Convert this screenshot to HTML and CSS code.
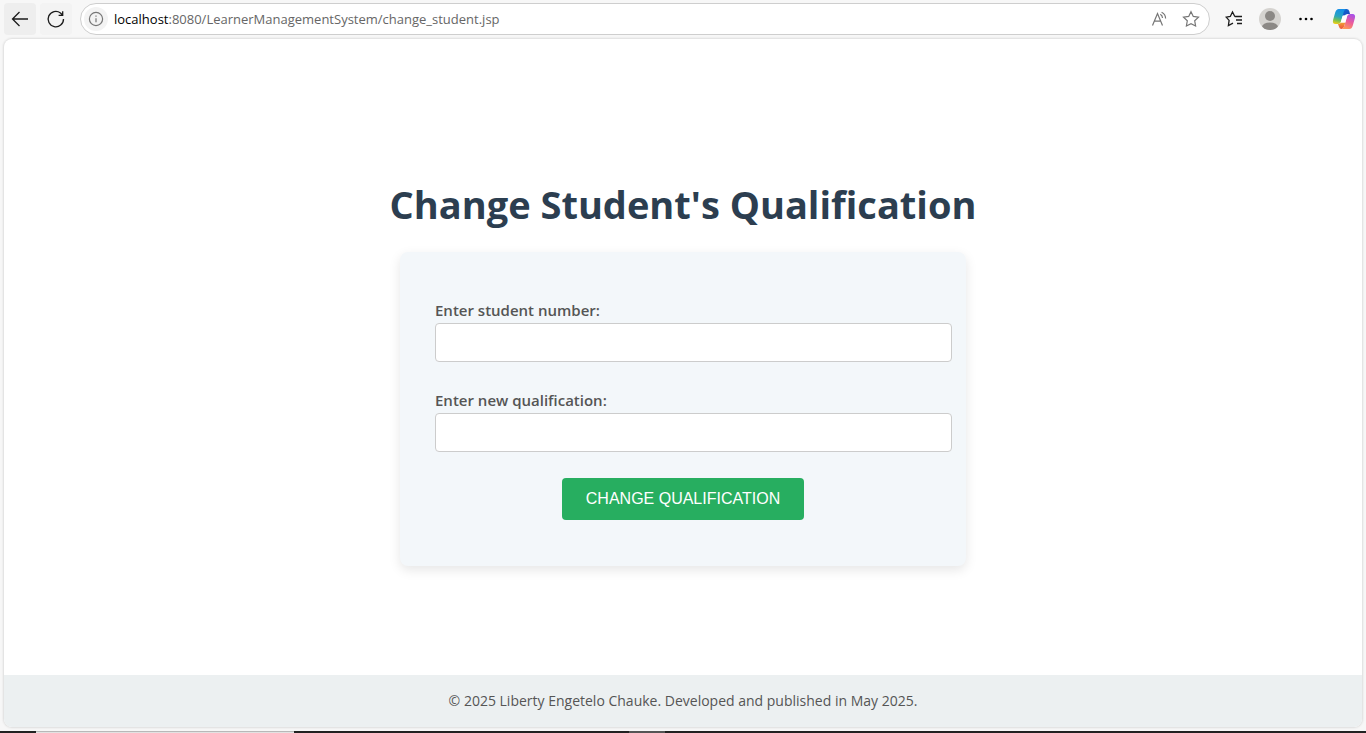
FILE: index.html
```html
<!DOCTYPE html>
<html lang="en">
<head>
<meta charset="utf-8">
<title>Change Student's Qualification</title>
<link rel="stylesheet" href="styles.css">
</head>
<body>
<header class="toolbar">
  <button class="tool tool-back" aria-label="Back">
    <svg width="20" height="20" viewBox="0 0 20 20"><path d="M18 10H2.500M9.500 3L2.500 10L9.500 17"/></svg>
  </button>
  <button class="tool tool-reload" aria-label="Reload">
    <svg width="20" height="20" viewBox="0 0 20 20"><path d="M17.500 10A7.700 7.700 0 1 1 14.500 4L16.700 6.300M16.700 2.300V6.300H12.600"/></svg>
  </button>
  <div class="address">
    <button class="info" aria-label="Site information">
      <svg width="16" height="16" viewBox="0 0 16 16"><circle cx="8" cy="8" r="6.600"/><path d="M8 7.300V11.200M8 4.600V5.800"/></svg>
    </button>
    <div class="url"><span class="host">localhost</span>:8080/LearnerManagementSystem/change_student.jsp</div>
    <button class="address-tool" aria-label="Read aloud">
      <svg width="18" height="18" viewBox="0 0 18 18"><path d="M2.500 15.500L7.500 3.500L12.500 15.500M4.300 11.200H10.700M10.300 4.200Q12.500 5.500 12.500 8M11.600 2.300Q15.600 4.300 15.600 8.600"/></svg>
    </button>
    <button class="address-tool" aria-label="Add to favorites">
      <svg width="18" height="18" viewBox="0 0 18 18"><path d="M9 1.700L11.300 6.400L16.500 7.200L12.700 10.800L13.600 16L9 13.600L4.400 16L5.300 10.800L1.500 7.200L6.700 6.400Z"/></svg>
    </button>
  </div>
  <nav class="browser-tools" aria-label="Browser">
    <button class="browser-tool" aria-label="Favorites">
      <svg class="line" width="18" height="18" viewBox="0 0 18 18"><path d="M9.800 6.500H17M11 10H17M12 13.500H17M9.800 6.500L7.500 2L5.300 6.500L1.200 7.200L4.100 10.400L3.400 15.500L8 13.200"/></svg>
    </button>
    <button class="browser-tool" aria-label="Profile">
      <svg width="22" height="22" viewBox="0 0 22 22"><defs><clipPath id="face"><circle cx="11" cy="11" r="11"/></clipPath></defs><g clip-path="url(#face)"><path fill="#d5d3d0" d="M0 0H22V22H0Z"/><circle cx="11" cy="8" r="5" fill="#8b8885"/><ellipse cx="11" cy="19" rx="8" ry="4.500" fill="#8b8885"/></g></svg>
    </button>
    <button class="browser-tool" aria-label="Settings and more">
      <svg width="16" height="16" viewBox="0 0 16 16"><circle cx="2.500" cy="8" r="1.300"/><circle cx="8" cy="8" r="1.300"/><circle cx="13.500" cy="8" r="1.300"/></svg>
    </button>
    <button class="browser-tool" aria-label="Copilot">
      <svg width="24" height="22" viewBox="0 0 24 22">
        <defs>
          <linearGradient id="cool" x1="0.500" y1="0" x2="0.300" y2="1"><stop offset="0" stop-color="#168fe8"/><stop offset=".5" stop-color="#2aa5bd"/><stop offset=".75" stop-color="#72bf55"/><stop offset="1" stop-color="#f1cf16"/></linearGradient>
          <linearGradient id="warm" x1="0.700" y1="0" x2="0.300" y2="1"><stop offset="0" stop-color="#a951e8"/><stop offset=".5" stop-color="#ec5b9b"/><stop offset="1" stop-color="#ff9a55"/></linearGradient>
          <linearGradient id="blue" x1="0" y1="0" x2="1" y2="1"><stop offset="0" stop-color="#0b73d8"/><stop offset="1" stop-color="#2046bb"/></linearGradient>
          <linearGradient id="ember" x1="0" y1="0" x2="0" y2="1"><stop offset="0" stop-color="#f0a030"/><stop offset="1" stop-color="#ee5040"/></linearGradient>
        </defs>
        <path fill="url(#blue)" d="M8 1H14.500Q16.700 1 17.300 3.200L18 6H15.500Q13.500 6 12.800 7.500H10Z"/>
        <path fill="url(#cool)" d="M6.700 1H14Q12.500 1.500 11.700 4L9 13.500Q8.300 16 6 16H3.500Q0 16 1.200 11.500L3.200 4.500Q4.300 1 6.700 1Z"/>
        <path fill="url(#ember)" d="M6 16Q8.300 16 9 14.500H13.300L12.300 18Q11.500 21 9.700 21Q7.500 21 7 18.700Z"/>
        <path fill="url(#warm)" d="M17.300 21H9.700Q11.500 20.500 12.300 18L15 8.500Q15.700 6 18 6H20.500Q24 6 22.800 10.500L20.800 17.500Q19.800 21 17.300 21Z"/>
        <path fill="#ffffff" d="M12.800 7.500H15.300L13.300 14.500H8.700L9 13.500L10.500 8.500Q11 7.500 12.800 7.500Z"/>
      </svg>
    </button>
  </nav>
</header>
<div class="page">
  <main class="content">
    <h1 class="title">Change Student's Qualification</h1>
    <form class="card">
      <div class="field">
        <label for="student-number">Enter student number:</label>
        <input id="student-number" type="text" name="studentNumber">
      </div>
      <div class="field">
        <label for="qualification">Enter new qualification:</label>
        <input id="qualification" type="text" name="qualification">
      </div>
      <button class="submit" type="submit">CHANGE QUALIFICATION</button>
    </form>
  </main>
  <footer class="footer">© 2025 Liberty Engetelo Chauke. Developed and published in May 2025.</footer>
</div>
<div class="taskbar"><span class="task-search"></span><span class="task-active"></span></div>
</body>
</html>
```
FILE: styles.css
```css
* { box-sizing: border-box; }

body {
  margin: 0;
  min-height: 100vh;
  display: flex;
  flex-direction: column;
  background: #f7f7f7;
  font-family: "Segoe UI", "Open Sans", sans-serif;
}

button {
  border: 0;
  padding: 0;
  background: none;
}

svg { display: block; }

.toolbar {
  display: flex;
  align-items: center;
  padding: 3px 8px 4px 4px;
}

.tool {
  display: grid;
  place-items: center;
  width: 32px;
  height: 32px;
  margin-right: 4px;
  border-radius: 4px;
  background: #f3f3f3;
}

.tool-back { background: #eeeeee; }

.tool-reload { margin-right: 8px; }

.tool svg,
.line {
  fill: none;
  stroke: #1b1b1b;
  stroke-width: 1.3;
}

.address {
  flex: 1;
  display: flex;
  align-items: center;
  height: 32px;
  padding: 0 8px 0 3px;
  border: 1px solid #cecece;
  border-radius: 16px;
  background: #ffffff;
}

.info {
  display: grid;
  place-items: center;
  width: 24px;
  height: 24px;
  border-radius: 50%;
  background: #f3f3f3;
}

.info svg,
.address-tool svg {
  fill: none;
  stroke: #767676;
  stroke-width: 1.2;
}

.url {
  flex: 1;
  padding-left: 6px;
  font-size: 13px;
  line-height: 20px;
  color: #666666;
}

.host { color: #000000; }

.address-tool {
  display: grid;
  place-items: center;
  width: 20px;
  margin-left: 12px;
}

.browser-tools {
  display: flex;
  align-items: center;
  padding-left: 6px;
}

.browser-tool {
  display: grid;
  place-items: center;
  width: 36px;
  height: 32px;
}

.browser-tool:last-child {
  width: 28px;
  margin-left: 6px;
}

.page {
  flex: 1;
  display: flex;
  flex-direction: column;
  margin: 0 4px 4px;
  overflow: hidden;
  border-radius: 8px;
  background: #ffffff;
  box-shadow: 0 0 2px 1px #dddddd;
}

.content {
  flex: 1;
  display: flex;
  flex-direction: column;
  align-items: center;
  justify-content: center;
  padding-top: 28px;
}

.title {
  margin: 0 0 20px;
  font-size: 38px;
  line-height: 56px;
  font-weight: 700;
  color: #2c3e50;
}

.card {
  display: flex;
  flex-direction: column;
  width: 100%;
  max-width: 566px;
  padding: 46px 14px 46px 35px;
  border-radius: 8px;
  background: #f3f7fa;
  box-shadow: 0 4px 12px rgba(0, 0, 0, 0.1);
}

.field {
  display: flex;
  flex-direction: column;
  margin-bottom: 26px;
  font-size: 15px;
  line-height: 25px;
  font-weight: 600;
  color: #555555;
}

.field input {
  height: 39px;
  padding: 8px;
  border: 1px solid #cccccc;
  border-radius: 4px;
  background: #ffffff;
  font-size: 16px;
}

.submit {
  align-self: center;
  margin-right: 21px;
  padding: 12px 24px;
  border-radius: 4px;
  background: #27ae60;
  color: #ffffff;
  font-family: Arial, "Liberation Sans", sans-serif;
  font-size: 16px;
  line-height: 18px;
}

.footer {
  padding: 16px;
  background: #ecf0f1;
  color: #555555;
  font-size: 14px;
  line-height: 20px;
  text-align: center;
}

.taskbar {
  display: flex;
  height: 2px;
  background: #222222;
}

.task-search {
  width: 258px;
  margin-left: 36px;
  background: #e2e2e2;
  border-top: 1px solid #b8b8b8;
}

.task-active {
  width: 36px;
  margin-left: 335px;
  background: #555555;
}
```
